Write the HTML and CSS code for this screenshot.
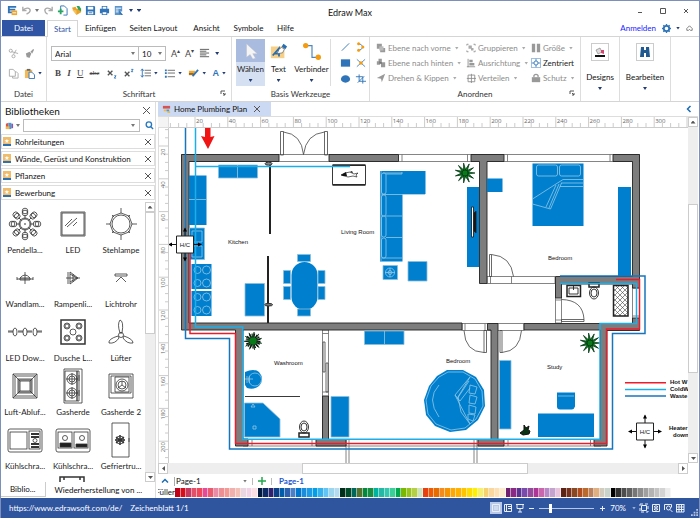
FILE: index.html
```html
<!DOCTYPE html>
<html lang="de">
<head>
<meta charset="utf-8">
<title>Edraw Max</title>
<link rel="stylesheet" href="styles.css">
</head>
<body>
<div class="app">
<header class="titlebar">
  <div class="quick">
    <button aria-label="Edraw"><svg viewBox="0 0 12 12"><path fill="#2f74b8" d="M1 1h9v2H3v1h6v2H3v1h3v2H1z"/><path fill="#f0a62c" d="M5 6h6v5H5z"/><path stroke="#fff" d="M6 8.500h4"/></svg></button>
    <button aria-label="Rückgängig"><svg viewBox="0 0 12 12" class="ln grey"><path stroke-width="1.500" d="M2 2v4h4M2 6c3-4 8-3 8 0 0 2-2 3-4 4"/></svg></button>
    <i class="caret pale"></i>
    <button aria-label="Wiederholen"><svg viewBox="0 0 12 12" class="ln grey"><path stroke-width="1.500" d="M10 2v4H6M10 6C7 2 2 3 2 6c0 2 1 3 3 4"/></svg></button>
    <button aria-label="Neu"><svg viewBox="0 0 12 12" class="ln"><path stroke="#2f74b8" d="M4 6V1h4l3 3v7H7"/><path stroke="#27a562" stroke-width="2" d="M1 7h6M4 4v6"/></svg></button>
    <button aria-label="Öffnen"><svg viewBox="0 0 12 12"><path fill="#e9a227" d="M1 3l4-1 1 2 5 0v4l-5 3z"/><path fill="#29a55d" d="M6 1h3l2 3v3L8 5z"/><path fill="#f5c35c" d="M1 5l5 1 0 5z"/></svg></button>
    <button aria-label="Speichern"><svg viewBox="0 0 12 12"><path fill="#2f74b8" d="M1 1h9l1 1v9H1z"/><path fill="#fff" d="M3 2h6v3H3zM3 7h6v3H3z"/><path stroke="#2f74b8" d="M4 8.500h4"/></svg></button>
    <button aria-label="Drucken"><svg viewBox="0 0 12 12"><path fill="#2f74b8" d="M3 1h6v3h2v5H9v2H3V9H1V4h2z"/><path fill="#fff" d="M4 2h4v2H4zM4 8h4v2H4z"/></svg></button>
    <button aria-label="Vorschau" class="last"><svg viewBox="0 0 12 12"><path fill="#5b93cb" d="M2 1h8v6H8v4H2z"/><path stroke="#fff" d="M3 3.500h6M3 5.500h3M3 7.500h3"/><path fill="#2f74b8" d="M7 6l4 5H9l-2-1z"/></svg></button>
    <i class="caret"></i><i class="caret bar"></i>
  </div>
  <h1>Edraw Max</h1>
  <div class="winbtns">
    <button aria-label="Minimieren"><svg viewBox="0 0 8 8" class="ln"><path d="M2 5.500h4"/></svg></button>
    <button aria-label="Maximieren"><svg viewBox="0 0 8 8" class="ln"><path d="M1.500 1.500h5v5h-5z"/></svg></button>
    <button aria-label="Schließen"><svg viewBox="0 0 8 8" class="ln"><path d="M2 2l4 4M6 2L2 6"/></svg></button>
  </div>
</header>
<nav class="tabs">
  <button class="file">Datei</button><button class="on">Start</button><button class="t3">Einfügen</button><button class="t4">Seiten Layout</button><button class="t3">Ansicht</button><button class="t5">Symbole</button><button class="t6">Hilfe</button>
  <div class="account">
    <a href="#">Anmelden</a>
    <button aria-label="Optionen"><svg viewBox="0 0 10 10"><circle cx="5" cy="5" r="3" fill="none" stroke="#2f74b8" stroke-width="2"/><path stroke="#2f74b8" stroke-width="1.500" d="M5 0v2M5 8v2M0 5h2M8 5h2M1.500 1.500l1.500 1.500M7 7l1.500 1.500M8.500 1.500L7 3M3 7L1.500 8.500"/></svg></button>
    <i class="caret"></i>
    <button aria-label="Menüband einklappen"><svg viewBox="0 0 10 10" class="ln"><path d="M2 5l3-3 3 3v2H6L5 6 4 7H2z" stroke-width=".8"/></svg></button>
  </div>
</nav>
<section class="ribbon">
  <div class="group g-file">
    <div class="rows">
      <div class="line l1"><button aria-label="Ausschneiden"><svg viewBox="0 0 12 12" class="ln grey"><circle cx="3" cy="3" r="1.700"/><circle cx="6" cy="9" r="1.700"/><path d="M4 4l7 2M6 7l3-5"/></svg></button><button aria-label="Format übertragen"><svg viewBox="0 0 12 12"><path fill="#999" d="M2 6l4-2 2 2-2 5-2-1-1 0zM7 4l3-3 1 1-2 4z"/></svg></button></div>
      <div class="line l2"><button aria-label="Kopieren"><svg viewBox="0 0 12 12" class="ln grey"><path d="M1.500 9V1.500h4L8 4v5zM5 9v2h6V6L9 4H8"/></svg></button><button aria-label="Einfügen"><svg viewBox="0 0 12 12"><path fill="#f2ba59" d="M1 2h8v9H1z"/><path fill="#666" d="M3 1h4v2H3z"/><path fill="#fff" stroke="#2f74b8" d="M5.500 4.500h3l3 3v4h-6z"/></svg></button><i class="caret"></i></div>
    </div>
    <p>Datei</p>
  </div>
  <div class="group g-font">
    <div class="rows">
      <div class="line l1">
        <label class="combo font"><select aria-label="Schriftart"><option>Arial</option></select><i class="caret pale"></i></label><label class="combo size"><select aria-label="Schriftgröße"><option>10</option></select><i class="caret pale"></i></label>
        <button class="glyph big">A<sup>▴</sup></button><button class="glyph big">A<sup>▾</sup></button>
        <button aria-label="Ausrichten"><svg viewBox="0 0 12 12" stroke="#555"><path d="M1 1.500h10M1 3.500h7M1 5.500h10M1 7.500h7M1 9.500h10"/></svg></button><i class="caret"></i>
      </div>
      <div class="line l2 fmt">
        <button class="glyph"><b>B</b></button><button class="glyph"><b><em>I</em></b></button><button class="glyph"><u>U</u></button><button class="glyph sm"><s>abc</s></button>
        <button aria-label="Tiefgestellt"><svg viewBox="0 0 12 12" class="ln"><path stroke-width="1.500" d="M2 3l5 5M7 3L2 8"/><path stroke="#2f74b8" d="M9 8.500h2L9 11h2"/></svg></button>
        <button aria-label="Hochgestellt"><svg viewBox="0 0 12 12" class="ln"><path stroke-width="1.500" d="M2 4l5 5M7 4L2 9"/><path stroke="#2f74b8" d="M9 1.500h2L9 4h2"/></svg></button>
        <span class="pair"><button aria-label="Zeilenabstand"><svg viewBox="0 0 12 12" stroke="#666"><path d="M5 2.500h7M5 5.500h7M5 8.500h7"/><path fill="none" stroke="#2f74b8" d="M2.500 1v9M1 3l1.500-2L4 3M1 8l1.500 2L4 8"/></svg></button><i class="caret"></i></span>
        <span class="pair"><button aria-label="Aufzählung"><svg viewBox="0 0 12 12" stroke="#666"><path d="M4 2.500h8M4 5.500h8M4 9.500h8"/><path stroke="#2f74b8" stroke-width="2" d="M1 2.500h2M1 5.500h2M1 9.500h2"/></svg></button><i class="caret"></i></span>
        <span class="pair"><button aria-label="Hervorheben"><svg viewBox="0 0 12 12"><path fill="#f2a72d" d="M1 3h7l-1 5H1z"/><path stroke="#2f74b8" stroke-width="2" d="M5 9l6-7"/><path stroke="#333" d="M1 6.500h5"/></svg></button><i class="caret"></i></span>
        <span class="pair"><button class="glyph blue"><b>A</b></button><i class="caret"></i></span>
      </div>
    </div>
    <p>Schriftart<svg viewBox="0 0 6 6" class="ln launch"><path d="M1 4V1h4M3 3l2 2M5 3v2H3"/></svg></p>
  </div>
  <div class="group g-tools">
    <div class="tools">
      <button class="tool sel"><span class="pic"><svg viewBox="0 0 20 20"><path fill="#f4f4f4" stroke="#bbc" stroke-width=".5" d="M5 2l12 11h-5l3 5-3 1-3-5-4 3z"/></svg></span>Wählen<i class="caret"></i></button>
      <button class="tool"><span class="pic"><svg viewBox="0 0 20 20"><path fill="#f8cf87" d="M1 5h15v13H1z"/><path fill="none" stroke="#246eb4" stroke-width="2" d="M3 15L10 7v9M5 13h6"/><path fill="#fff" stroke="#456" stroke-width=".7" d="M8 13l2-5 3-2 3 2-2 4z"/><path fill="#246eb4" d="M13 5l2-3 4 3-2 3z"/></svg></span>Text<i class="caret"></i></button>
      <button class="tool conn"><span class="pic"><svg viewBox="0 0 20 20"><path fill="none" stroke="#4c87bf" stroke-width="1.300" d="M3 4h7v13h6"/><circle cx="3" cy="4" r="3" fill="#f39c11"/><circle cx="17" cy="17" r="3" fill="#f39c11"/></svg></span>Verbinder<i class="caret"></i></button>
      <div class="mini">
        <button aria-label="Linie"><svg viewBox="0 0 12 12"><path stroke="#2f74b8" d="M2 10l8-8"/></svg></button>
        <button aria-label="Bogen"><svg viewBox="0 0 12 12"><path fill="none" stroke="#4c87bf" d="M4 2q9 4 0 8"/><circle cx="4" cy="2.500" r="1.700" fill="#f39c11"/><circle cx="8.500" cy="6" r="1.700" fill="#f39c11"/><circle cx="4" cy="9.500" r="1.700" fill="#f39c11"/></svg></button>
        <button aria-label="Rechteck"><svg viewBox="0 0 12 12"><path fill="#2f74b8" d="M1 2h10v8H1z"/></svg></button>
        <button aria-label="Kreuzung"><svg viewBox="0 0 12 12"><path stroke="#4c87bf" d="M2 2l9 8M11 2l-9 8"/><circle cx="6.500" cy="6" r="2" fill="#f39c11"/></svg></button>
        <button aria-label="Ellipse"><svg viewBox="0 0 12 12"><ellipse cx="6" cy="6" rx="5" ry="4" fill="#2f74b8"/></svg></button>
        <button aria-label="Zuschneiden"><svg viewBox="0 0 12 12" fill="none" stroke="#2f74b8"><path d="M4.500 1v7.500H12M1 3.500h7.500V11M3 10l7-7"/></svg></button>
      </div>
    </div>
    <p>Basis Werkzeuge</p>
  </div>
  <div class="group g-arr">
    <div class="cols">
      <button class="cmd"><svg viewBox="0 0 12 12"><path fill="#999" d="M1 1h6v6H1zM8 6h3v5H5V8h3z"/><path fill="#bbb" d="M4 4h5v5H4z"/></svg>Ebene nach vorne<i class="caret pale"></i></button>
      <button class="cmd"><svg viewBox="0 0 12 12"><path fill="#999" d="M3 1h4v3H3zM1 4h4v4H1zM6 5h5v6H6z"/><path fill="#777" d="M4 4h3v3H4z"/></svg>Ebene nach hinten<i class="caret pale"></i></button>
      <button class="cmd"><svg viewBox="0 0 12 12"><path fill="#999" d="M1 6l10-5-4 10-1-4z"/></svg>Drehen &amp; Kippen<i class="caret pale"></i></button>
      <button class="cmd"><svg viewBox="0 0 12 12"><path fill="#aaa" d="M3 3h4v4H3zM6 6h3v3H6z"/><path fill="none" stroke="#888" d="M1 3V1.500h2M9 1.500h2V3M1 9v1.500h2M9 10.500h2V9"/></svg>Gruppieren<i class="caret pale"></i></button>
      <button class="cmd"><svg viewBox="0 0 12 12"><path stroke="#888" d="M2.500 1v10M1 10.500h10"/><path fill="#999" d="M4 2h4v3H4zM4 6h6v3H4z"/></svg>Ausrichtung<i class="caret pale"></i></button>
      <button class="cmd"><svg viewBox="0 0 12 12" fill="none" stroke="#888"><path d="M2.500 2.500h8v8h-8zM6.500 1v11M1 6.500h11"/></svg>Verteilen<i class="caret pale"></i></button>
      <button class="cmd"><svg viewBox="0 0 12 12"><path fill="#999" d="M1 1h4v10H1zM7 1h4v10H7z"/></svg>Größe<i class="caret pale"></i></button>
      <button class="cmd act"><svg viewBox="0 0 12 12" fill="none" stroke="#2f74b8"><path d="M.500.500h11v11H.500z" opacity=".6"/><circle cx="6" cy="6" r="2.500"/><path d="M6 1v3M6 8v3M1 6h3M8 6h3"/></svg>Zentriert</button>
      <button class="cmd"><svg viewBox="0 0 12 12"><path fill="#999" d="M1 5h10v6H1z"/><path fill="none" stroke="#999" stroke-width="1.500" d="M3.500 5V3q2.500-3 5 0v2"/></svg>Schutz<i class="caret pale"></i></button>
    </div>
    <p>Anordnen<svg viewBox="0 0 6 6" class="ln launch"><path d="M1 4V1h4M3 3l2 2M5 3v2H3"/></svg></p>
  </div>
  <div class="group big g-des"><button><span class="box"><svg viewBox="0 0 12 12"><path fill="#111" d="M1 9h10v2H1z"/><path fill="#ddd" stroke="#777" stroke-width=".6" d="M2 4l4-2 2 4-4 2z"/><path fill="#d34770" d="M7 4h3v4L7 7z"/></svg></span>Designs<i class="caret"></i></button></div>
  <div class="group big g-edit"><button><span class="box"><svg viewBox="0 0 12 12"><path fill="#205a90" d="M2 1h3v3h2V1h3l1 10H7V7H5v4H1z"/></svg></span>Bearbeiten<i class="caret"></i></button></div>
</section>
<main class="work">
  <aside class="side">
    <div class="head"><h2>Bibliotheken</h2><button class="x" aria-label="Schließen"></button></div>
    <div class="search"><svg viewBox="0 0 10 10"><path fill="#d9534a" d="M1 3l3-1v7H1z"/><path fill="#3f9cd8" d="M4 2h3v7H4z"/><path fill="#8e54a5" d="M7 3h2v5H7z"/><path fill="#f5b64a" d="M1 6h4v3H1z"/></svg><i class="caret pale"></i><div class="field"><input type="text" aria-label="Bibliothek suchen"><i class="caret pale"></i></div><button aria-label="Suchen"><svg viewBox="0 0 10 10" fill="none" stroke="#2878be" stroke-width="1.500"><circle cx="4.300" cy="4" r="3"/><path d="M6.500 6.500L9 9"/></svg></button></div>
    <div class="libs">
      <div class="lib"><i class="book">★</i>Rohrleitungen<button class="x" aria-label="Schließen"></button></div>
      <div class="lib"><i class="book">★</i>Wände, Gerüst und Konstruktion<button class="x" aria-label="Schließen"></button></div>
      <div class="lib"><i class="book">★</i>Pflanzen<button class="x" aria-label="Schließen"></button></div>
      <div class="lib"><i class="book">★</i>Bewerbung<button class="x" aria-label="Schließen"></button></div>
    </div>
    <div class="shapes">
      <div class="grid">
        <figure><svg viewBox="0 0 36 36"><g id="petals"><circle cx="18" cy="5" r="2.800"/><circle cx="18" cy="7" r="2.800"/><path d="M18 9v4"/></g><use href="#petals" transform="rotate(45 18 18)"/><use href="#petals" transform="rotate(90 18 18)"/><use href="#petals" transform="rotate(135 18 18)"/><use href="#petals" transform="rotate(180 18 18)"/><use href="#petals" transform="rotate(225 18 18)"/><use href="#petals" transform="rotate(270 18 18)"/><use href="#petals" transform="rotate(315 18 18)"/><circle cx="18" cy="18" r="5"/><circle cx="18" cy="18" r="6"/><circle cx="18" cy="18" r=".5"/></svg><figcaption>Pendella...</figcaption></figure>
        <figure><svg viewBox="0 0 36 36"><path d="M6 6h24v24H6z"/><path d="M7 7h22v22H7z"/><path d="M10 20l7-7M12 21l10-9M18 20l4-4"/></svg><figcaption>LED</figcaption></figure>
        <figure><svg viewBox="0 0 36 36"><circle cx="18" cy="18" r="9"/><path d="M18 7l8 3 3 8-3 8-8 3-8-3-3-8 3-8zM18 2v5M18 29v5M3 18h4M29 18h5M9 9l2 2M27 9l-2 2M9 27l2-2M27 27l-2-2"/></svg><figcaption>Stehlampe</figcaption></figure>
        <figure><svg viewBox="0 0 36 36"><path d="M13 20v-2q5-6 10 0v2zM10 19h16M18 12v12M10 17v3M26 17v3M13 18h10"/></svg><figcaption>Wandlam...</figcaption></figure>
        <figure><svg viewBox="0 0 36 36"><path d="M13 12v12M15 12v12l8-6zM11 18h14M18 14v8M15 14l7 4-7 4"/></svg><figcaption>Rampenli...</figcaption></figure>
        <figure><svg viewBox="0 0 36 36"><path d="M12 14h12v2H12zM18 17l-5 5M18 17l5 5"/></svg><figcaption>Lichtrohr</figcaption></figure>
        <figure><svg viewBox="0 0 36 36"><path d="M1 17h5M11 17h5M20 17h5M30 17h5M1 18h5M11 18h5M20 18h5M30 18h5"/><ellipse cx="8" cy="18" rx="2" ry="4"/><ellipse cx="18" cy="18" rx="2" ry="4"/><ellipse cx="28" cy="18" rx="2" ry="4"/></svg><figcaption>LED Dow...</figcaption></figure>
        <figure><svg viewBox="0 0 36 36"><path stroke-width="1.500" d="M6 6h24v24H6z"/><circle cx="12" cy="12" r="3"/><circle cx="24" cy="12" r="3"/><circle cx="12" cy="24" r="3"/><circle cx="24" cy="24" r="3"/><circle cx="12" cy="12" r="2"/><circle cx="24" cy="12" r="2"/><circle cx="12" cy="24" r="2"/><circle cx="24" cy="24" r="2"/><circle cx="18" cy="18" r="3"/></svg><figcaption>Dusche L...</figcaption></figure>
        <figure><svg viewBox="0 0 36 36"><circle cx="18" cy="21" r="2.500"/><path d="M17 19q-3-9 0-13 4 1 2 13zM15 22q-10 3-9 7 6 1 10-5zM21 22q9 3 9 7-6 1-10-5z"/></svg><figcaption>Lüfter</figcaption></figure>
        <figure><svg viewBox="0 0 36 36"><path d="M6 6h24v24H6zM8 8h20v20H8zM11 11h14v14H11zM12 12h12v12H12zM13 13h10v10H13zM6 6l7 7M30 6l-7 7M6 30l7-7M30 30l-7-7"/></svg><figcaption>Luft-Abluf...</figcaption></figure>
        <figure><svg viewBox="0 0 36 36"><path d="M9 1h18v34H9zM10 3h12v30H10zM22 3h2v30h-2z"/><circle cx="17" cy="11" r="5"/><circle cx="17" cy="25" r="5"/><circle cx="17" cy="11" r="3"/><circle cx="17" cy="25" r="3"/><path d="M11 11h12M17 5v12M11 25h12M17 19v12M24 7v6M24 22v6"/></svg><figcaption>Gasherde</figcaption></figure>
        <figure><svg viewBox="0 0 36 36"><path d="M6 6h24v24H6zM8 8h20v17H8zM12 9h14v15H12z"/><circle cx="19" cy="17" r="6"/><circle cx="19" cy="17" r="4"/><path d="M19 17v-4M19 17l-4 3M19 17l4 3"/></svg><figcaption>Gasherde 2</figcaption></figure>
        <figure><svg viewBox="0 0 36 36"><rect x="1" y="7" width="34" height="23" rx="2"/><rect x="3" y="10" width="17" height="17"/><rect x="22" y="9" width="11" height="18"/><path stroke-width="2" d="M24 12h8M24 15h8M24 22h8M24 25h8"/><circle cx="28" cy="18.500" r="2"/></svg><figcaption>Kühlschra...</figcaption></figure>
        <figure><svg viewBox="0 0 36 36"><rect x="1" y="7" width="34" height="23" rx="2"/><rect x="3" y="10" width="14" height="16"/><rect x="19" y="10" width="14" height="16"/><path fill="#222" d="M5 21h11v4H5zM21 22h11v3H21z"/><circle cx="10" cy="16" r="2.500"/><circle cx="27" cy="16" r="2.500"/></svg><figcaption>Kühlschra...</figcaption></figure>
        <figure><svg viewBox="0 0 36 36"><path d="M9 1h17v34H9zM26 16v4"/><circle cx="17" cy="18" r="4"/><path stroke-width="1.500" d="M17 13v10M12 18h10M13 15l8 6M21 15l-8 6"/></svg><figcaption>Gefriertru...</figcaption></figure>
        <figure></figure>
        <figure><svg viewBox="0 0 36 36"><path stroke-width="1.500" d="M5 6V1h24v5M9 1v3M25 1v3"/></svg></figure>
      </div>
      <div class="vbar"><button class="arrow up" aria-label="Nach oben"></button><div class="thumb shapes-thumb"></div><span class="fill"></span><button class="arrow down" aria-label="Nach unten"></button></div>
    </div>
    <div class="sidetabs"><button class="on">Biblio...</button><button>Wiederherstellung von ...</button></div>
  </aside>
  <section class="doc">
    <div class="doctabs"><button class="doctab"><svg viewBox="0 0 10 10"><path fill="#d65353" d="M1 1h8v3H1z"/><path fill="#f3bb3e" d="M2 5h3v2H2zM6 7h3v2H6z"/><path fill="#4a9ad4" d="M5 5h3v2H5z"/></svg>Home Plumbing Plan<i class="x"></i></button><svg viewBox="0 0 8 8" class="chev"><path d="M5.500 1l-3 3 3 3"/></svg></div>
    <div class="sheet">
      <span class="corner"></span>
      <svg class="hruler" id="hruler"></svg>
      <div class="vbar main"><button class="arrow up" aria-label="Nach oben"></button><span class="gap"></span><div class="thumb"></div><span class="fill"></span><button class="arrow down" aria-label="Nach unten"></button></div>
      <svg class="vruler" id="vruler"></svg>
      <svg class="plan" viewBox="169 128 519 335" preserveAspectRatio="xMinYMin slice">
        <defs>
          <g id="hc"><path stroke="#111" fill="none" d="M-16 0h32M0-16v32"/><path d="M-17 0l4-2v4zM17 0l-4-2v4zM0-17l-2 4h4zM0 17l-2-4h4z"/><path fill="#fff" stroke="#222" d="M-8.500-8.500h17v17h-17z"/><text text-anchor="middle" y="2">H/C</text></g>
          <path id="leaf" d="M0-1.500L10 0 0 1.500z"/>
          <g id="plant" fill="#087a18" stroke="#031" stroke-width=".7"><use href="#leaf"/><use href="#leaf" transform="rotate(32)"/><use href="#leaf" transform="rotate(65)"/><use href="#leaf" transform="rotate(98)"/><use href="#leaf" transform="rotate(130)"/><use href="#leaf" transform="rotate(163)"/><use href="#leaf" transform="rotate(196)"/><use href="#leaf" transform="rotate(229)"/><use href="#leaf" transform="rotate(262)"/><use href="#leaf" transform="rotate(295)"/><use href="#leaf" transform="rotate(328)"/><circle r="3"/></g>
          <g id="hob"><path class="f" d="M0 0h20v25H0z"/><g class="o"><circle cx="6" cy="6" r="3.500"/><circle cx="15" cy="6" r="4"/><circle cx="6" cy="19" r="3.500"/><circle cx="15" cy="19" r="4"/></g></g>
          <g id="wc"><path stroke-width="1.500" d="M-5 5H5v4H-5z"/><ellipse cx="0" cy="-1" rx="4.500" ry="6"/><ellipse cx="0" cy="-1" rx="3" ry="4"/></g>
          <pattern id="mesh" width="5" height="5" patternUnits="userSpaceOnUse"><path d="M0 0l5 5M5 0L0 5" stroke="#444" stroke-width=".6"/></pattern>
        </defs>
        <g class="frame">
          <path d="M181.500 154.500h458v7h-458zM243 439.500h358v6.500H243zM487 276.500h68v7h-68zM462 323.500h62v7h-62zM555.500 284h6v39h-6zM632.500 284h7v39h-7zM322.500 330h6v109h-6z"/>
          <path d="M402 154.500v7M467.500 154.500v7M507.500 154.500v7M610 154.500v7M252 439.500v6.500M312 439.500v6.500M508 439.500v6.500M590.500 439.500v6.500M490.500 276.500v7M511.500 276.500v7M465 323.500v7M485 323.500v7M346 440v23M349 440v23M474 440v23M477 440v23M322.500 333.500h6M322.500 392h6M555.500 300h6M555.500 320h6M632.500 288h7M632.500 316h7"/>
        </g>
        <g class="wall">
          <path d="M181.500 154.500H279v7h-90V323h273v7H243v109h5v7h-12.500V330h-54z"/>
          <path d="M329 154.500h69.500v7H329zM471 154.500h33v7h-17V283.500h-7.500v-122H471zM613 154.500h26.500V288h-7V284H561.500v14h-6V276.500H632.500v-115H613zM632.500 318h7v12.500H607V446H594v-6.500h6.500V330H524v-6.500h108.500zM487.500 323.500h10.500v116h6v6.500h-26v-6.500h13V330h-3.500zM322.500 396h6v43.500H346v6.500h-30v-6.500h6.500z"/>
        </g>
        <g class="door">
          <path d="M280.500 131.500h3V155h-3zM324.500 131.500h3V155h-3zM283.500 132q18 2 20 22.500Q306 134 324.500 132"/>
          <path d="M489.500 254.500h2v22h-2zM491.500 254.500Q511 256 513.500 276.500"/>
          <path d="M484 330.500h2.500v22H484zM464 330.500Q465 352 484 352.500M500 330.500h2v22h-2zM521.500 330.500Q520 351 502 352.500"/>
          <path d="M561.500 319.500h22.500v2h-22.500zM561.500 299.500Q583 300 584 319.500M323 342h2v30h-2zM326 363h2v29h-2z"/>
        </g>
        <g class="f">
          <path d="M189 175.500h17.500v49.500H189z"/><path class="p" d="M189.500 228h15v31.500h-15z"/><path class="p" d="M218.500 165h39v13h-39z"/>
          <path class="p" d="M245 283.500h19.500V316H245z"/>
          <rect x="291.500" y="262" width="26" height="48" rx="13"/>
          <path class="p" d="M297.500 254.500h13v7h-13zM297.500 309h13v7h-13zM283.500 270.500h7v13h-7zM283.500 286.500h7v13h-7zM318 270.500h7v13h-7zM318 286.500h7v13h-7z"/>
          <path class="p" d="M383 265.500h14.500v14H383zM408 261.500h19v19.500h-19z"/>
          <path d="M380 171h45.500v23H402.500v67.500H380zM467 187h12v80h-12zM487 178.500h15.500V192H487zM532.500 163.500h51v62.500h-51zM618 187h13v89h-13z"/>
          <path class="p" d="M364.500 331h39.500v13.500h-39.500zM331 396.500h18V437h-18zM499.500 360.500h11.500V429h-11.500zM244.500 403H263l17 16v18h-35.500z"/>
          <path d="M538 413.500h56V437h-56zM557 392.500h18v14q-1 3-3 3h-12q-3 0-3-3z"/>
          <path d="M447 370h16l13 7 8 13 1 16-7 14-12 10-16 2-15-6-9-11-2-15 5-14 8-10z"/><path d="M245 372q9-4 14 0 6 7 0 14-5 4-12 2l-2-3z"/>
        </g>
        <use href="#hob" x="191.500" y="264"/><use href="#hob" x="191.500" y="291"/>
        <g class="o">
          <path d="M189 199.500h17.500M192 231h10v11h-10zM192 246h10v11h-10zM237.500 165v13M381 171v90M383 173h19M386 174h16v-2M382 194.500h43M386 216h16.500M386 237.500h16.500M382 258h20.500"/><rect x="381.500" y="173" width="4.500" height="21" rx="2"/><rect x="381.500" y="195" width="4.500" height="21" rx="2"/><rect x="381.500" y="216" width="4.500" height="21" rx="2"/><rect x="381.500" y="238" width="4.500" height="20" rx="2"/>
          <circle cx="390" cy="272.500" r="4.500"/><path d="M385 272.500h10M390 268v9"/><circle cx="390" cy="272.500" r="2"/>
          <rect x="536.500" y="165" width="21" height="11" rx="2"/><rect x="559.500" y="165" width="21" height="11" rx="2"/><path d="M583 179.500h-20L532.500 199v5l18 5 11-26M546 207l10-22M549 208l10-24M561 183h22M560 186.500h23"/>
          <path d="M384.500 331v13M558 396h16M439 385q-13 14 0 32M470 377l-15 18 15 29M470 377l-12 20 3 15 9 12M457 399l12-18M455 395l5 6 10-13M470 385l7 2-2 7-6-1zM470 395l7 2-2 7-6-1zM469 405l7 2-1 7-6-1zM468 414l7 1-2 6-5-2z"/><path d="M448 372h15l12 7 7 12 1 15-7 13-11 9-14 2-15-6-8-10-2-14 5-14 8-9z"/>
          <circle cx="255" cy="379.500" r="6.500"/><path d="M245 379h8M247 376v7M249.500 376v7M251 407l2-3 2 3zM253 426h3v3h-3z"/>
        </g>
        <path stroke="#222" stroke-width="2" d="M270 165v69M268 256v67"/><ellipse cx="268.600" cy="163.700" rx="3.500" ry="1.500" fill="#888" stroke="#333"/><ellipse cx="268.600" cy="304.700" rx="4" ry="1.300" fill="#777" stroke="#333"/>
        <g class="k"><path d="M332.500 165.500h33v19h-33z"/><path d="M332.500 165h33M332.500 185h33" stroke-width="1.500"/><path stroke-width=".7" d="M341 175l4-2 5-1 4 2 4-1-2 2 1 2-4-1-5 1z"/><path fill="#111" stroke="none" d="M341 175l5-3 1 4-4 0zM350 172l2-1 1 2z"/><path d="M245 396.500h55"/><path fill="#fff" d="M471.500 207h2v30h-2z"/><path fill="#111" d="M474 213l2-2v22l-2-2z"/><path d="M567 285.500h13.500v11H567z" stroke-width="1.500"/><path d="M569 288h9v6h-9zM573.500 286v4"/><path fill="url(#mesh)" stroke-width="1.500" d="M613.500 285.500h14.500V316h-14.500z"/><use href="#wc" x="304" y="428"/><use href="#wc" transform="translate(594 292) rotate(180)"/></g>
        <use href="#plant" x="465" y="173"/><use href="#plant" x="590" y="343"/>
        <g transform="translate(253 341)"><use href="#plant" transform="rotate(15) scale(.9)"/><circle r="5.500" fill="none" stroke="#111" stroke-width="4" stroke-dasharray="1 1"/><circle r="3.500" fill="#087a18"/></g>
        <path fill="#0b3313" stroke="#111" d="M520 433l4-3 0-5 2 3 3-2-1 4 2 1-1 3-6 1z"/>
        <g class="pipes">
          <path stroke="#1874bc" d="M185.500 128v210.500H229.500V449H612.500V333.500H645V276H560"/>
          <path stroke="#ed1c2b" d="M190 252v81.500h45.500v110h371V329h33V279.500H616"/>
          <path stroke="#1caee9" d="M195.500 128v199H242.700V439.300H600V323.500h36.500V283.500H560M195.500 166.500H350"/>
          <path stroke="#ed1c2b" d="M625 382.700h41"/><path stroke="#1caee9" d="M625 389.500h41"/><path stroke="#1874bc" d="M625 396h41"/>
        </g>
        <path fill="#f01414" d="M205 128h5.500v9l4-1-6.500 13-7-13 4 1z"/>
        <use href="#hc" x="185" y="244.500"/><use href="#hc" x="645" y="431.500"/>
        <text x="228" y="244">Kitchen</text><text x="341" y="234">Living Room</text><text x="548" y="260">Bedroom</text><text x="274" y="365">Washroom</text><text x="446" y="363">Bedroom</text><text x="547" y="369">Study</text>
        <g class="bold"><text x="670" y="384">Hot W</text><text x="670" y="391">ColdW</text><text x="670" y="398">Waste</text><text x="669" y="430">Heater</text><text x="673" y="437">down</text></g>
      </svg>
      <div class="hbar"><button class="arrow left" aria-label="Nach links"></button><span class="before"></span><div class="thumb"></div><span class="after"></span><button class="arrow right" aria-label="Nach rechts"></button></div>
    </div>
    <div class="pages"><svg viewBox="0 0 8 8" class="chev"><path d="M1 5.500l3-3 3 3"/></svg><label class="pagesel"><select aria-label="Seite"><option>Page-1</option></select><i class="caret pale"></i></label><span class="sep"></span><button class="plus" aria-label="Seite hinzufügen"><svg viewBox="0 0 8 8"><path stroke="#20a84c" stroke-width="1.500" d="M0 4h8M4 0v8"/></svg></button><span class="sep"></span><a href="#" class="page">Page-1</a></div>
    <div class="palette"><span class="filler"><span>Füller</span></span><div class="swatches" id="swatches"></div></div>
  </section>
</main>
<footer class="status">
  <a href="#">https://www.edrawsoft.com/de/</a><span>Zeichenblatt 1/1</span>
  <div class="views">
    <button class="on" aria-label="Normal"><svg viewBox="0 0 10 10" class="ln"><path d="M1.500 1.500h7v7h-7zM3 4h4M3 6h4"/></svg></button>
    <button aria-label="Layout"><svg viewBox="0 0 10 10" class="ln"><path d="M1.500 1.500h7v7h-7zM3.500 2v6M5 3.500h3M5 5.500h3"/></svg></button>
    <button aria-label="Präsentation"><svg viewBox="0 0 10 10" class="ln"><path d="M1 1.500h8M2 2v3.500h6V2M5 6v3M3 9h4"/></svg></button>
  </div>
  <button class="sign" aria-label="Verkleinern"><svg viewBox="0 0 8 8" class="ln"><path d="M2 4.500h5"/></svg></button>
  <input type="range" min="10" max="400" value="80" aria-label="Zoom">
  <button class="sign" aria-label="Vergrößern"><svg viewBox="0 0 8 8" class="ln"><path d="M2 4.500h5M4.500 2v5"/></svg></button>
  <span class="pct">70%</span><i class="caret pale"></i>
  <div class="fits">
    <button aria-label="Ganze Seite"><svg viewBox="0 0 10 10" class="ln"><path d="M2.500 2.500h5v5h-5z"/><path stroke-dasharray="3 2" d="M1 1h8v8H1z"/></svg></button>
    <button aria-label="Seitenbreite"><svg viewBox="0 0 10 10" class="ln"><path d="M1.500 1.500h7v7h-7zM3 5h4M5 2v6M3 3.500h1M6 3.500h1M3 6.500h1M6 6.500h1"/></svg></button>
    <button aria-label="Lupe"><svg viewBox="0 0 10 10" class="ln"><path d="M1.500 7V1.500h7v3"/><circle cx="5.500" cy="5" r="2"/><path d="M7 6.500L9.500 9"/></svg></button>
    <button aria-label="Raster"><svg viewBox="0 0 10 10" class="ln"><path d="M1.500 1v8M4 1v8M6.500 1v8M9 1v8M1 1.500h8M1 4h8M1 6.500h8M1 9h8"/></svg></button>
  </div>
  <svg viewBox="0 0 8 8" class="grip"><path d="M6 0h2v2H6zM3 3h2v2H3zM6 3h2v2H6zM0 6h2v2H0zM3 6h2v2H3zM6 6h2v2H6z"/></svg>
</footer>
</div>
<script src="script.js"></script>
</body>
</html>
```
FILE: styles.css
```css
* { box-sizing: border-box; }
body { margin: 0; font: 8px/12px Lato, "Open Sans", sans-serif; color: #111; background: #fff; }
.app { display: flex; flex-direction: column; height: 100vh; border: solid #7c90bb; border-width: 1px 1px 0; overflow: hidden; }
button, input, select { font: inherit; color: inherit; background: none; border: 0; padding: 0; margin: 0; }
button { display: flex; align-items: center; justify-content: center; white-space: nowrap; }
select { appearance: none; outline: 0; }
a { text-decoration: none; color: inherit; }
h1, h2, p, figure { margin: 0; font-weight: 400; }
svg { width: 12px; height: 12px; flex: none; display: block; }
.ln { fill: none; stroke: #555; }
.ln.grey { stroke: #aaa; }
.caret { flex: none; width: 4px; height: 3px; background: #223c75; clip-path: polygon(0 0, 100% 0, 50% 100%); }
.caret.pale { background: #777; }
.caret.bar { clip-path: polygon(0 0, 100% 0, 100% 20%, 50% 100%, 0 20%); }
.x { flex: none; width: 7px; height: 7px; background: linear-gradient(45deg, transparent 45%, #555 45% 55%, transparent 55%), linear-gradient(-45deg, transparent 45%, #555 45% 55%, transparent 55%); }

.titlebar { display: grid; grid-template-columns: 1fr auto 1fr; align-items: center; height: 19px; flex: none; }
.quick { display: flex; align-items: center; gap: 2px; padding-left: 5px; }
.quick button { width: 12px; }
.quick .last { margin-right: 2px; }
.quick svg { width: 11px; height: 11px; }
.quick .caret { margin: 0 1px; }
h1 { font-size: 9px; padding-top: 4px; }
.winbtns { display: flex; justify-content: flex-end; gap: 15px; padding-right: 9px; }
.winbtns svg { width: 8px; height: 8px; }

.tabs { display: flex; height: 17px; flex: none; border-bottom: 1px solid #d5d5d5; padding-left: 1px; }
.tabs > button { height: 16px; width: 40px; }
.tabs .file { width: 43px; background: #2f55a4; color: #fff; margin-right: 2px; }
.tabs .on { width: 31px; height: 17px; border: solid #d5d5d5; border-width: 1px 1px 0; background: #fff; color: #2f55a4; }
.tabs .t3 { width: 45px; }
.tabs .t4 { width: 61px; }
.tabs .t5 { width: 39px; }
.tabs .t6 { width: 35px; }
.account { display: flex; align-items: center; gap: 5px; margin-left: auto; padding-right: 5px; }
.account a { color: #1d1dff; margin-right: 1px; }
.account svg { width: 9px; height: 9px; }

.ribbon { display: flex; height: 65px; flex: none; border-bottom: 1px solid #d5d5d5; }
.group { display: flex; flex-direction: column; justify-content: space-between; border-right: 1px solid #ddd; position: relative; padding-top: 2px; }
.group p { text-align: center; color: #333; padding-bottom: 1px; }
.g-file { width: 46px; }
.g-font { width: 185px; }
.g-tools { width: 138px; }
.g-arr { width: 211px; }
.g-des { width: 39px; }
.g-edit { width: 51px; }
.launch { position: absolute; right: 5px; bottom: 5px; width: 6px; height: 6px; }
.line { display: flex; align-items: center; height: 20px; gap: 5px; }
.l1 { padding-top: 6px; }
.g-file .line { padding-left: 7px; }
.g-file .line svg, .g-font .line svg { width: 11px; height: 11px; }
.g-file .l2 .caret { margin-left: -2px; }
.g-font .line { padding-left: 4px; }
.rows { display: flex; flex-direction: column; gap: 1px; }
.g-font .l1, .g-file .l1 { height: 23px; }
.combo { display: flex; align-items: center; height: 15px; border: 1px solid #bbb; padding: 0 3px; }
.combo select { flex: 1; min-width: 0; }
.combo.font { width: 88px; }
.combo.size { width: 28px; margin-left: -6px; }
.glyph { font: 9px/12px "Liberation Serif", serif; color: #444; }
.glyph.big { font: 9px/12px Lato, sans-serif; }
.glyph.sm { font-size: 7px; }
.glyph.blue { color: #2f74b8; font-family: "Liberation Sans", sans-serif; }
.glyph sup { font-size: 6px; line-height: 6px; align-self: flex-start; }
.g-font .fmt { justify-content: space-between; padding: 0 5px 0 8px; gap: 0; }
.pair { display: flex; align-items: center; gap: 3px; }

.tools { display: flex; padding-left: 4px; }
.tool { flex-direction: column; justify-content: flex-start; width: 29px; height: 47px; color: #222; }
.tool .pic { display: flex; align-items: center; justify-content: center; width: 100%; height: 23px; margin-bottom: 1px; }
.tool svg { width: 18px; height: 18px; }
.tool .caret, .big .caret { margin-top: 4px; }
.tool.sel { background: #d6e0f3; margin-right: -1px; }
.tool.sel .pic { background: #a9bbdf; }
.tool.conn { width: 37px; }
.mini { display: grid; grid-template-columns: 15px 15px; row-gap: 3px; padding: 1px 0 0 7px; border-left: 1px solid #ddd; }
.mini svg { width: 11px; height: 12px; }

.cols { display: grid; grid-auto-flow: column; grid-template-rows: repeat(3, 12px); row-gap: 3px; padding: 3px 0 0 6px; grid-template-columns: 90px 65px 45px; }
.cmd { justify-content: flex-start; gap: 2px; color: #8c8c8c; }
.cmd svg { width: 10px; height: 10px; }
.cmd.act { color: #222; }
.cmd .caret.pale { background: #aaa; margin-left: 2px; }
.big { justify-content: flex-start; }
.big button { flex-direction: column; padding-top: 4px; }
.box { display: flex; align-items: center; justify-content: center; width: 18px; height: 18px; border: 1px solid #ccc; margin-bottom: 10px; }

.work { display: flex; flex: 1; min-height: 0; }
.side { width: 155px; flex: none; display: flex; flex-direction: column; border-right: 1px solid #ddd; }
.head { display: flex; align-items: center; justify-content: space-between; height: 17px; padding: 0 5px 0 4px; }
h2 { font-size: 10px; }
.search { display: flex; align-items: center; gap: 2px; height: 13px; padding: 0 1px 0 4px; margin-bottom: 2px; }
.search svg { width: 9px; height: 9px; }
.field { display: flex; align-items: center; flex: 1; height: 13px; border: 1px solid #bbb; margin: 0 3px 0 1px; padding-right: 4px; }
.field input { flex: 1; min-width: 0; }
.lib { display: flex; align-items: center; gap: 4px; height: 15px; margin-bottom: 2px; padding: 0 3px 0 1px; border: 1px solid #ddd; }
.lib .x { margin-left: auto; width: 6px; height: 6px; }
.book { width: 8px; height: 9px; background: #eebc6b; border-bottom: 2px solid #2b71af; color: #fff; font: 6px/7px "DejaVu Sans", sans-serif; text-align: center; }
.shapes { display: flex; flex: 1; min-height: 0; overflow: hidden; }
.grid { flex: 1; display: grid; grid-template-columns: repeat(3, 48px); grid-auto-rows: 54px; align-content: start; }
figure { display: flex; flex-direction: column; align-items: center; gap: 2px; padding-top: 4px; color: #222; }
figure svg { width: 36px; height: 36px; fill: none; stroke: #333; stroke-width: .8; }
.vbar { display: flex; flex-direction: column; width: 10px; background: #eee; }
.thumb { background: #fff; border: 1px solid #ccc; }
.shapes-thumb { height: 122px; }
.fill { flex: 1; }
.arrow { width: 10px; height: 10px; flex: none; background: #fff; border: 1px solid #ccc; }
.arrow::before { content: ""; width: 5px; height: 3px; background: #555; clip-path: polygon(0 100%, 100% 100%, 50% 0); }
.arrow.down::before { transform: rotate(180deg); }
.arrow.left::before { transform: rotate(-90deg); }
.arrow.right::before { transform: rotate(90deg); }
.sidetabs { display: flex; height: 16px; padding-bottom: 1px; }
.sidetabs button { padding: 0 9px; }
.sidetabs .on { border: solid #ccc; border-width: 0 1px 1px 0; }

.doc { flex: 1; min-width: 0; display: flex; flex-direction: column; padding-left: 2px; }
.doctabs { display: flex; align-items: center; justify-content: space-between; height: 14px; flex: none; padding-right: 6px; }
.doctab { height: 14px; gap: 3px; padding: 0 11px 0 4px; background: #ccd9f2; }
.doctab svg { width: 9px; height: 9px; }
.doctab .x { width: 6px; height: 6px; margin-left: 4px; }
.chev { width: 8px; height: 8px; fill: none; stroke: #1d6cb3; stroke-width: 1.5; }
.sheet { flex: 1; min-height: 0; display: grid; grid-template: 11px minmax(0, 1fr) 11px / 11px minmax(0, 1fr) 10px; border-top: 1px solid #ddd; margin-right: 1px; }
.corner { border: solid #ddd; border-width: 0 1px 1px 0; background: #f4f4f4; }
.hruler { width: 100%; height: 11px; border-bottom: 1px solid #ccc; }
.vruler { width: 11px; height: 100%; border-right: 1px solid #ccc; border-left: 1px solid #ddd; }
.hruler path, .vruler path { stroke: #ccc; }
.hruler text, .vruler text { font: 6px "Open Sans", sans-serif; fill: #666; }
.main { grid-row: 1 / 3; grid-column: 3; }
.main .gap { flex: 77; }
.main .thumb { flex: 168; }
.main .fill { flex: 81; }
.plan { grid-area: 2 / 2; width: 100%; height: 100%; overflow: hidden; }
.plan text { font: 6px "Liberation Sans", sans-serif; fill: #111; }
.plan .bold text { font-weight: 700; }
.frame path { fill: #fff; stroke: #666; stroke-width: .8; }
.wall path { fill: #7d7d7d; stroke: #222; stroke-width: .9; }
.door path { fill: none; stroke: #444; stroke-width: .8; }
.f { fill: #007fce; }
.f .p { stroke: #8abfda; stroke-width: .8; }
.o { fill: none; stroke: #90c8e5; stroke-width: .8; }
.k { fill: none; stroke: #222; stroke-width: .9; }
.pipes path { fill: none; stroke-width: 1.5; }
.hbar { grid-column: 1 / 3; display: flex; background: #eee; }
.hbar .arrow, .hbar .thumb { height: 11px; }
.hbar .before { flex: 134; }
.hbar .thumb { flex: 225; }
.hbar .after { flex: 150; }
.pages { display: flex; align-items: center; height: 14px; flex: none; padding-left: 3px; gap: 5px; }
.pagesel { display: flex; align-items: center; justify-content: space-between; width: 73px; border-left: 1px solid #aaa; padding-left: 1px; height: 9px; }
.sep { width: 1px; height: 7px; background: #bbb; }
.plus svg { width: 8px; height: 8px; }
.page { color: #1d55d0; font-weight: 700; margin-left: 2px; }
.palette { display: flex; height: 9px; flex: none; padding-right: 28px; margin-bottom: 1px; }
.filler { width: 17px; display: flex; justify-content: flex-end; overflow: hidden; line-height: 9px; }
.swatches { display: flex; flex: 1; }
.swatches i { flex: 1; border-right: 1px solid #fff8; }

.status { display: flex; align-items: center; height: 20px; flex: none; margin: 0 -1px; padding: 0 2px 0 9px; background: #2f559f; color: #fff; gap: 8px; }
.status svg { width: 10px; height: 10px; }
.status .ln { stroke: #e8eefb; }
.views, .fits { display: flex; }
.views { margin: 0 -3px 0 auto; }
.views button { width: 12px; height: 12px; }
.views .on { background: #b9c8e6; }
.fits { margin: 0 -3px 0 -6px; }
.fits button { width: 12px; }
.status .sign svg { width: 8px; height: 8px; }
.sign { margin: 0 -4px; }
.status input { width: 55px; height: 10px; appearance: none; background: linear-gradient(#b9c6e2, #b9c6e2) center / 100% 1px no-repeat; }
.status input::-webkit-slider-thumb { appearance: none; width: 3px; height: 9px; background: #fff; }
.pct { margin-right: -2px; }
.status .caret { background: #9badd2; }
.status .grip { width: 7px; height: 7px; fill: #b9c6e2; align-self: flex-end; margin-bottom: 2px; }
```
FILE: script.js
```js
const NS = "http://www.w3.org/2000/svg";
function add(parent, tag, attrs, text) {
  const el = document.createElementNS(NS, tag);
  for (const key in attrs) el.setAttribute(key, attrs[key]);
  if (text !== undefined) el.textContent = text;
  parent.appendChild(el);
}

// One labelled mark every 20 units, three minor ticks between them.
const step = 32.8;
function ruler(el, length, start, draw) {
  for (let i = 0; start + (i - 4) * step / 4 < length; i++) {
    const at = start + (i - 4) * step / 4;
    const major = i % 4 === 0;
    draw(el, at, major ? 0 : 6, major && i && at + 12 < length ? i * 5 : null);
  }
}
const h = document.getElementById("hruler");
const v = document.getElementById("vruler");
ruler(h, h.getBoundingClientRect().width, 26, (el, at, from, label) => {
  add(el, "path", { d: `M${at} ${from}V11` });
  if (label) add(el, "text", { x: at + 1, y: 6 }, label);
});
ruler(v, v.getBoundingClientRect().height, 18, (el, at, from, label) => {
  add(el, "path", { d: `M${from} ${at}H11` });
  if (label) add(el, "text", { transform: `translate(6 ${at + 6}) rotate(-90)`, "text-anchor": "middle" }, label);
});

const colors = "c00016 d80c1a c8375f e2506a f0485a e84a9a ea5b70 e98ca8 ee8f94 f39a95 efb0ae f3c0b8 ead5e3 f3d3e6 fbe0e6 001b3f 0c2a66 302270 0b3f86 005ba8 2e5fae 4a80c8 0077cf 1b8bdc 1c9be6 009fe8 35b1ee 62c4f4 9bd5ee b3dcf0 00301c 004b2a 00675a 54732c 008a3e 168f45 00b3a0 25b8a5 35c8b0 3ccf98 00a94f 7ab800 98c41d b4d046 cde3c0 e8400f f05a00 e66c00 f58a1d f79400 ffa900 ffb300 ffc400 ffdd00 fff000 f8ef70 f7d070 fbd7a0 fde0b4 fdebd0 702070 8b2a86 5c3393 7a4bab 964a9c ad3595 c966ad b889c8 c5a3cf e7c3dc 5c2313 78301b 8a4724 b24b1d ba6a2c bd825d e0b083 d2ccbe c8d3cb 000000 303030 4d4d4d 606060 777777 8d8d8d a0a0a0 b3b3b3 c3c3c3 d3d3d3 ececec".split(" ");
const swatches = document.getElementById("swatches");
for (const c of colors) {
  const el = document.createElement("i");
  el.style.background = "#" + c;
  swatches.appendChild(el);
}
```
